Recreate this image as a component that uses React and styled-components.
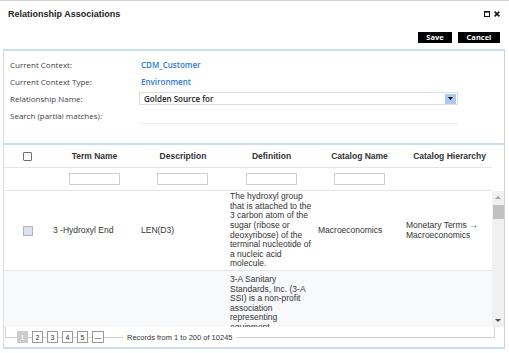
import React from "react";
import styled, { createGlobalStyle } from "styled-components";

const GlobalStyle = createGlobalStyle`
  html, body {
    margin: 0;
    padding: 0;
    background: #fff;
  }
  body {
    font-family: "Liberation Sans", Arial, sans-serif;
    color: #333;
  }
`;

const Dialog = styled.div`
  width: 509px;
  height: 353px;
  box-sizing: border-box;
  border-top: 1px solid #cfcfcf;
  overflow: hidden;
  display: flex;
  flex-direction: column;
`;

const TitleBar = styled.div`
  height: 26px;
  display: flex;
  align-items: center;
  justify-content: space-between;
  padding: 0 9px 0 8px;
`;

const Title = styled.div`
  font-weight: bold;
  font-size: 9px;
  color: #222;
`;

const WindowIcons = styled.div`
  display: flex;
  align-items: center;
  gap: 4px;
`;

const Toolbar = styled.div`
  display: flex;
  justify-content: flex-end;
  gap: 6px;
  padding: 5px 9px 6px;
`;

const BlackButton = styled.button`
  height: 11px;
  width: ${(p) => p.$w}px;
  padding: 0;
  border: none;
  background: #000;
  color: #fff;
  font-family: "Open Sans", sans-serif;
  font-weight: bold;
  font-size: 7.5px;
  line-height: 11px;
`;

const Panel = styled.div`
  margin: 0 4px 0 3px;
  border-top: 2px solid #c9ddf2;
  border-bottom: 2px solid #c9ddf2;
  border-left: 1px solid #dcdcdc;
  border-right: 1px solid #d0d0d0;
  padding: 5px 0 19px;
  display: grid;
  grid-template-columns: 135px 319px;
  grid-auto-rows: 17px;
  font-family: "Open Sans", sans-serif;
  font-size: 8px;
`;

const Label = styled.div`
  display: flex;
  align-items: center;
  padding-left: 6px;
  color: #3f3f3f;
`;

const Value = styled.div`
  display: flex;
  align-items: center;
  padding-left: 2px;
  color: #2b7bd1;
  font-weight: 600;
`;

const Field = styled.div`
  display: flex;
  align-items: ${(p) => (p.$end ? "flex-end" : "center")};
`;

const Select = styled.div`
  width: 100%;
  height: 13px;
  box-sizing: border-box;
  border: 1px solid #dcdcdc;
  display: flex;
  align-items: center;
  justify-content: space-between;
  padding: 0 1px 0 4px;
  font-weight: 600;
  color: #222;
`;

const SelectArrow = styled.span`
  width: 11px;
  height: 10px;
  background: #a9cbf0;
  display: flex;
  align-items: center;
  justify-content: center;
`;

const SearchInput = styled.div`
  width: 100%;
  height: 14px;
  border-bottom: 1px solid #eeeeee;
`;

const TableSection = styled.div`
  margin: 0 4px 0 3px;
  border-left: 1px solid #dcdcdc;
  border-right: 1px solid #d0d0d0;
  border-bottom: 2px solid #c9ddf2;
  display: flex;
  flex-direction: column;
`;

const GridRow = styled.div`
  width: 488px;
  display: grid;
  grid-template-columns: 43px 88px 89px 88px 88px 92px;
  height: ${(p) => p.$h}px;
  box-sizing: border-box;
  border-bottom: 1px solid ${(p) => p.$line || "#e6e6e6"};
  background: ${(p) => p.$bg || "#fff"};
  flex-shrink: 0;
`;

const HeadCell = styled.div`
  display: flex;
  align-items: center;
  justify-content: center;
  padding-left: ${(p) => (p.$check ? 4 : 7)}px;
  font-weight: bold;
  font-size: 8.5px;
  color: #333;
`;

const FilterCell = styled.div`
  display: flex;
  align-items: center;
  padding-left: 22px;
`;

const FilterInput = styled.div`
  width: 51px;
  height: 12px;
  box-sizing: border-box;
  border: 1px solid #cfcfcf;
  background: #fff;
`;

const Body = styled.div`
  display: flex;
  height: 136px;
`;

const Rows = styled.div`
  width: 488px;
  overflow: hidden;
  display: flex;
  flex-direction: column;
`;

const Cell = styled.div`
  display: flex;
  align-items: center;
  justify-content: ${(p) => (p.$check ? "center" : "flex-start")};
  padding: 0 0 0 ${(p) => (p.$check ? 5 : 6)}px;
  font-size: 8.5px;
  line-height: 9.6px;
  color: #333;
  overflow: hidden;
`;

const TopCell = styled(Cell)`
  align-items: flex-start;
  padding-top: 4px;
`;

const HeaderBox = styled.span`
  width: 9px;
  height: 9px;
  box-sizing: border-box;
  border: 1px solid #6f6f6f;
  border-radius: 1px;
  background: #fff;
`;

const RowBox = styled.span`
  width: 10px;
  height: 10px;
  box-sizing: border-box;
  border: 1px solid #aab4c0;
  background: #dce2e9;
`;

const Scrollbar = styled.div`
  width: 12px;
  background: #f0f0f0;
  display: flex;
  flex-direction: column;
  align-items: center;
`;

const ScrollArrow = styled.div`
  height: 13px;
  display: flex;
  align-items: center;
  justify-content: center;
`;

const Thumb = styled.div`
  width: 11px;
  height: 14px;
  background: #c1c1c1;
  margin-top: 1px;
`;

const Footer = styled.div`
  height: 20px;
  margin: 0 9px 0 1px;
  display: flex;
  align-items: center;
  padding-left: 12px;
  gap: 4px;
  background:
    linear-gradient(#cfcfcf, #cfcfcf) left top / 1px 50% no-repeat,
    linear-gradient(#cfcfcf, #cfcfcf) right top / 1px 50% no-repeat,
    linear-gradient(#cfcfcf, #cfcfcf) left center / 100% 1px no-repeat;
`;

const PageBox = styled.span`
  width: ${(p) => p.$w || 11}px;
  height: 12px;
  box-sizing: border-box;
  border: 1px solid ${(p) => (p.$active ? "#cccccc" : "#9a9a9a")};
  background: ${(p) => (p.$active ? "#cccccc" : "#fff")};
  color: ${(p) => (p.$active ? "#fff" : "#333")};
  font-size: 7px;
  display: flex;
  align-items: center;
  justify-content: center;
`;

const Records = styled.span`
  margin-left: 15px;
  padding: 0 4px;
  background: #fff;
  font-size: 7.5px;
  color: #333;
`;

const pages = ["1", "2", "3", "4", "5"];

const rows = [
  {
    h: 80,
    check: true,
    term: "3 -Hydroxyl End",
    desc: "LEN(D3)",
    def: "The hydroxyl group that is attached to the 3 carbon atom of the sugar (ribose or deoxyribose) of the terminal nucleotide of a nucleic acid molecule.",
    cat: "Macroeconomics",
    hier: "Monetary Terms \u2192 Macroeconomics",
  },
  {
    h: 80,
    bg: "#f8f9fb",
    top: true,
    def: "3-A Sanitary Standards, Inc. (3-A SSI) is a non-profit association representing equipment manufacturers, processors, regulatory sanitarians and others.",
  },
];

export default function App() {
  return (
    <>
      <GlobalStyle />
      <Dialog>
        <TitleBar>
          <Title>Relationship Associations</Title>
          <WindowIcons>
            <svg width="6" height="6" viewBox="0 0 6 6">
              <rect x="0.5" y="0.5" width="5" height="5" fill="none" stroke="#111" strokeWidth="1" />
              <rect x="0" y="0" width="6" height="1.6" fill="#111" />
            </svg>
            <svg width="6" height="6" viewBox="0 0 6 6">
              <path d="M0.6 0.6L5.4 5.4M5.4 0.6L0.6 5.4" stroke="#111" strokeWidth="1.5" />
            </svg>
          </WindowIcons>
        </TitleBar>

        <Toolbar>
          <BlackButton $w={34}>Save</BlackButton>
          <BlackButton $w={42}>Cancel</BlackButton>
        </Toolbar>

        <Panel>
          <Label>Current Context:</Label>
          <Value>CDM_Customer</Value>
          <Label>Current Context Type:</Label>
          <Value>Environment</Value>
          <Label>Relationship Name:</Label>
          <Field>
            <Select>
              Golden Source for
              <SelectArrow>
                <svg width="5" height="3" viewBox="0 0 5 3">
                  <path d="M0 0H5L2.5 3Z" fill="#000" />
                </svg>
              </SelectArrow>
            </Select>
          </Field>
          <Label>Search (partial matches):</Label>
          <Field $end>
            <SearchInput />
          </Field>
        </Panel>

        <TableSection>
          <GridRow $h={23}>
            <HeadCell $check>
              <HeaderBox />
            </HeadCell>
            <HeadCell>Term Name</HeadCell>
            <HeadCell>Description</HeadCell>
            <HeadCell>Definition</HeadCell>
            <HeadCell>Catalog Name</HeadCell>
            <HeadCell>Catalog Hierarchy</HeadCell>
          </GridRow>
          <GridRow $h={23}>
            <div />
            <FilterCell><FilterInput /></FilterCell>
            <FilterCell><FilterInput /></FilterCell>
            <FilterCell><FilterInput /></FilterCell>
            <FilterCell><FilterInput /></FilterCell>
            <div />
          </GridRow>

          <Body>
            <Rows>
              {rows.map((r, i) => {
                const C = r.top ? TopCell : Cell;
                return (
                  <GridRow key={i} $h={r.h} $bg={r.bg} $line="#e2e8ef">
                    <Cell $check>{r.check && <RowBox />}</Cell>
                    <C>{r.term}</C>
                    <C>{r.desc}</C>
                    <C>{r.def}</C>
                    <C>{r.cat}</C>
                    <C>{r.hier}</C>
                  </GridRow>
                );
              })}
            </Rows>
            <Scrollbar>
              <ScrollArrow>
                <svg width="6" height="3" viewBox="0 0 6 3">
                  <path d="M0 3H6L3 0Z" fill="#a3a3a3" />
                </svg>
              </ScrollArrow>
              <Thumb />
              <div style={{ flex: 1 }} />
              <ScrollArrow>
                <svg width="6" height="3" viewBox="0 0 6 3">
                  <path d="M0 0H6L3 3Z" fill="#505050" />
                </svg>
              </ScrollArrow>
            </Scrollbar>
          </Body>

          <Footer>
            {pages.map((p, i) => (
              <PageBox key={p} $active={i === 0}>
                {p}
              </PageBox>
            ))}
            <PageBox $w={12}>&mdash;</PageBox>
            <Records>Records from 1 to 200 of 10245</Records>
          </Footer>
        </TableSection>
      </Dialog>
    </>
  );
}
